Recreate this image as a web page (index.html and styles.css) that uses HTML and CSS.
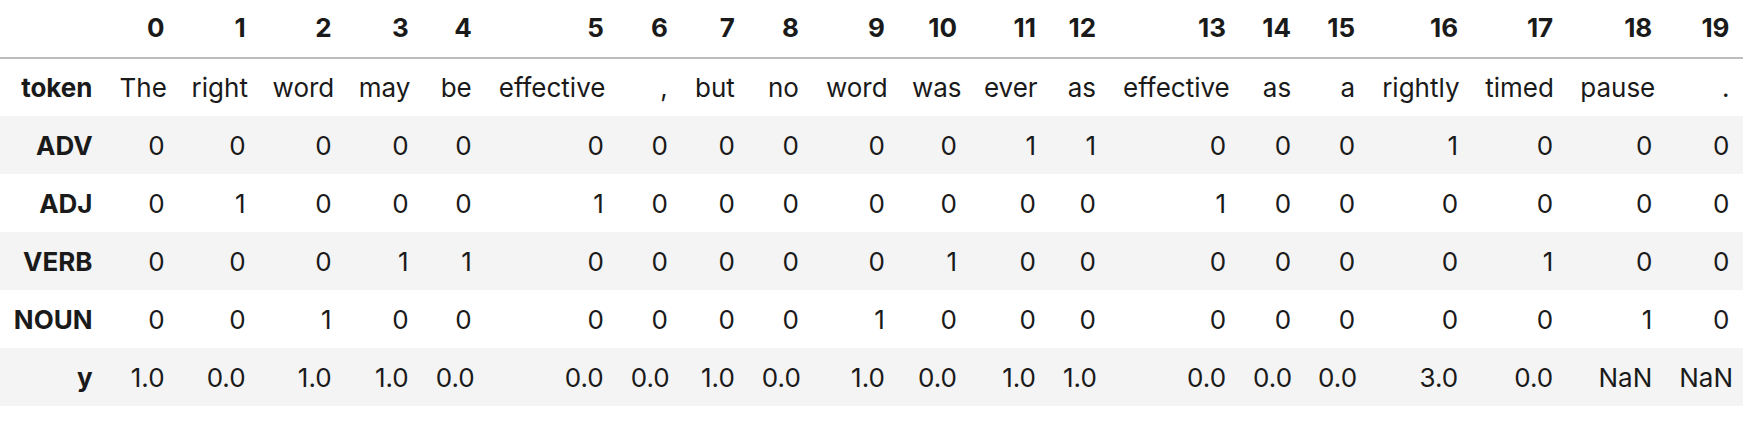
FILE: index.html
```html
<!DOCTYPE html>
<html>
<head>
<meta charset="utf-8">
<link rel="stylesheet" href="styles.css">
</head>
<body>
<table class="df">
  <colgroup>
    <col class="w-idx"><col class="w0"><col class="w1"><col class="w2"><col class="w3"><col class="w4"><col class="w5"><col class="w6"><col class="w7"><col class="w8"><col class="w9"><col class="w10"><col class="w11"><col class="w12"><col class="w13"><col class="w14"><col class="w15"><col class="w16"><col class="w17"><col class="w18"><col class="w19">
  </colgroup>
  <thead>
    <tr><th></th><th>0</th><th>1</th><th>2</th><th>3</th><th>4</th><th>5</th><th>6</th><th>7</th><th>8</th><th>9</th><th>10</th><th>11</th><th>12</th><th>13</th><th>14</th><th>15</th><th>16</th><th>17</th><th>18</th><th>19</th></tr>
  </thead>
  <tbody>
    <tr><th>token</th><td>The</td><td>right</td><td>word</td><td>may</td><td>be</td><td>effective</td><td>,</td><td>but</td><td>no</td><td>word</td><td>was</td><td>ever</td><td>as</td><td>effective</td><td>as</td><td>a</td><td>rightly</td><td>timed</td><td>pause</td><td>.</td></tr>
    <tr><th>ADV</th><td>0</td><td>0</td><td>0</td><td>0</td><td>0</td><td>0</td><td>0</td><td>0</td><td>0</td><td>0</td><td>0</td><td>1</td><td>1</td><td>0</td><td>0</td><td>0</td><td>1</td><td>0</td><td>0</td><td>0</td></tr>
    <tr><th>ADJ</th><td>0</td><td>1</td><td>0</td><td>0</td><td>0</td><td>1</td><td>0</td><td>0</td><td>0</td><td>0</td><td>0</td><td>0</td><td>0</td><td>1</td><td>0</td><td>0</td><td>0</td><td>0</td><td>0</td><td>0</td></tr>
    <tr><th>VERB</th><td>0</td><td>0</td><td>0</td><td>1</td><td>1</td><td>0</td><td>0</td><td>0</td><td>0</td><td>0</td><td>1</td><td>0</td><td>0</td><td>0</td><td>0</td><td>0</td><td>0</td><td>1</td><td>0</td><td>0</td></tr>
    <tr><th>NOUN</th><td>0</td><td>0</td><td>1</td><td>0</td><td>0</td><td>0</td><td>0</td><td>0</td><td>0</td><td>1</td><td>0</td><td>0</td><td>0</td><td>0</td><td>0</td><td>0</td><td>0</td><td>0</td><td>1</td><td>0</td></tr>
    <tr><th>y</th><td>1.0</td><td>0.0</td><td>1.0</td><td>1.0</td><td>0.0</td><td>0.0</td><td>0.0</td><td>1.0</td><td>0.0</td><td>1.0</td><td>0.0</td><td>1.0</td><td>1.0</td><td>0.0</td><td>0.0</td><td>0.0</td><td>3.0</td><td>0.0</td><td>NaN</td><td>NaN</td></tr>
  </tbody>
</table>
</body>
</html>
```
FILE: styles.css
```css
html, body {
  margin: 0;
  padding: 0;
  background: #ffffff;
}

.df {
  border-collapse: collapse;
  border-spacing: 0;
  table-layout: fixed;
  width: 1743px;
  font-family: Inter, "Noto Sans", sans-serif;
  font-size: 26px;
  color: #1a1a1a;
}

.df th,
.df td {
  padding: 0 13.5px;
  text-align: right;
  vertical-align: middle;
  white-space: nowrap;
  line-height: 31px;
  height: 58px;
  box-sizing: border-box;
}

.df th {
  font-weight: 700;
}

.df td {
  font-weight: 400;
}

.df thead th {
  height: 58px;
  padding-bottom: 3px;
  border-bottom: 2px solid #bdbdbd;
}

.df tbody tr:nth-child(even) {
  background: #f4f4f4;
}

.w-idx { width: 106px; }
.w0 { width: 72px; }
.w1 { width: 81px; }
.w2 { width: 86px; }
.w3 { width: 77px; }
.w4 { width: 63px; }
.w5 { width: 132px; }
.w6 { width: 64px; }
.w7 { width: 67px; }
.w8 { width: 64px; }
.w9 { width: 86px; }
.w10 { width: 72px; }
.w11 { width: 79px; }
.w12 { width: 60px; }
.w13 { width: 130px; }
.w14 { width: 65px; }
.w15 { width: 64px; }
.w16 { width: 103px; }
.w17 { width: 95px; }
.w18 { width: 99px; }
.w19 { width: 77px; }
```
